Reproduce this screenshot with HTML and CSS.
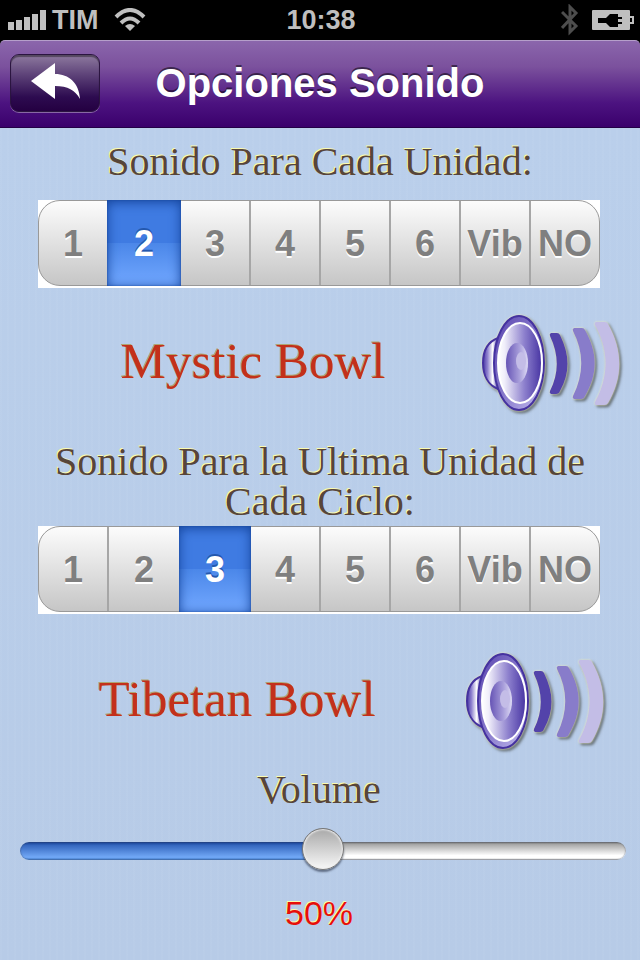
FILE: index.html
```
<!DOCTYPE html>
<html lang="es">
<head>
  <meta charset="utf-8">
  <meta name="viewport" content="width=device-width">
  <title>Opciones Sonido</title>
  <link rel="stylesheet" href="styles.css">
</head>
<body>
  <div class="status">
    <div class="status-left">
      <svg width="38" height="20" viewBox="0 0 38 20" fill="#bfbfbf">
        <path d="M0 12h6v8H0zM8 10h6v10H8zM16 7h6v13h-6zM24 4h6v16h-6zM32 0h6v20h-6z"/>
      </svg>
      <span class="carrier">TIM</span>
      <svg width="32" height="24" viewBox="0 0 32 24">
        <g fill="none" stroke="#bfbfbf" stroke-width="4">
          <path d="M2 9Q16-5 30 9"/>
          <path d="M7 15Q16 6 25 15"/>
        </g>
        <path d="M11 18q5-4 10 0l-5 5z" fill="#bfbfbf"/>
      </svg>
    </div>
    <span>10:38</span>
    <div class="status-right">
      <svg width="18" height="32" viewBox="0 0 18 32" fill="none" stroke="#4d4d4d" stroke-width="3">
        <path d="M1 8l14 14-6 6V3l6 6L1 24"/>
      </svg>
      <svg width="42" height="20" viewBox="0 0 42 20">
        <rect width="38" height="20" rx="1" fill="#bfbfbf"/>
        <path d="M38 7h3v6h-3" fill="none" stroke="#bfbfbf" stroke-width="2"/>
        <path d="M6 8h8l4-4h8v3h4v2h-4v3h4v2h-4v3h-8l-4-4H6z" fill="#000"/>
      </svg>
    </div>
  </div>

  <header class="navbar">
    <button class="back" type="button" aria-label="Atrás">
      <svg width="50" height="40" viewBox="0 0 50 40">
        <path d="M1 18L25 0v11c14 0 24 9 25 25-5-9-12-13-25-13v13z" fill="#fff"/>
      </svg>
    </button>
    <h1>Opciones Sonido</h1>
  </header>

  <main>
    <h2 id="unitTitle">Sonido Para Cada Unidad:</h2>
    <div class="segments" role="radiogroup" aria-labelledby="unitTitle">
      <div class="segments-inner">
        <label><input type="radio" name="unit"><span>1</span></label>
        <label><input type="radio" name="unit" checked><span>2</span></label>
        <label><input type="radio" name="unit"><span>3</span></label>
        <label><input type="radio" name="unit"><span>4</span></label>
        <label><input type="radio" name="unit"><span>5</span></label>
        <label><input type="radio" name="unit"><span>6</span></label>
        <label><input type="radio" name="unit"><span>Vib</span></label>
        <label><input type="radio" name="unit"><span>NO</span></label>
      </div>
    </div>
    <div class="sound">
      <span class="sound-name">Mystic Bowl</span>
      <button class="play" type="button" aria-label="Escuchar Mystic Bowl">
        <svg width="142" height="100" viewBox="0 0 142 100">
          <defs>
            <linearGradient id="back">
              <stop offset="0" stop-color="#4935a4"/>
              <stop offset=".3" stop-color="#8f82cf"/>
              <stop offset=".65" stop-color="#fff"/>
              <stop offset="1" stop-color="#5b49ad"/>
            </linearGradient>
            <linearGradient id="rim" x1="0" y1="0" x2="1" y2="1">
              <stop offset="0" stop-color="#5a45b0"/>
              <stop offset=".5" stop-color="#8678ca"/>
              <stop offset="1" stop-color="#c4bdf0"/>
            </linearGradient>
            <linearGradient id="cone">
              <stop offset="0" stop-color="#fff"/>
              <stop offset=".15" stop-color="#f0eefa"/>
              <stop offset=".6" stop-color="#8d80cd"/>
              <stop offset="1" stop-color="#4633a2"/>
            </linearGradient>
            <linearGradient id="cap">
              <stop offset="0" stop-color="#6654b5"/>
              <stop offset=".6" stop-color="#a79dda"/>
              <stop offset="1" stop-color="#dedaf5"/>
            </linearGradient>
            <g id="speakerShape">
              <path d="M18 24C7 28 3 37 3 49s5 22 15 26z" fill="url(#back)" stroke="#4532a0" stroke-width="2"/>
              <ellipse cx="39" cy="49" rx="25" ry="47" fill="url(#rim)" stroke="#4532a0" stroke-width="2"/>
              <ellipse cx="40" cy="49" rx="22" ry="40" fill="url(#cone)" stroke="#fff" stroke-width="2"/>
              <ellipse cx="37" cy="49" rx="11" ry="20" fill="url(#cap)"/>
              <ellipse cx="41" cy="47" rx="5" ry="9" fill="#c4bde7"/>
              <path d="M71 19h6q2 0 3 2c10 20 10 38 0 56q-1 3-4 3h-5q-2-1-1-3c9-18 9-36 0-55q-1-2 1-3z" fill="#5343aa"/>
              <path d="M94 14h8q2 0 3 2c13 23 13 44 0 66q-1 3-4 3h-7q-2-1-1-3c11-22 11-44 0-65q-1-2 1-3z" fill="#887cca"/>
              <path d="M116 8h9q2 0 3 2c15 27 15 53 0 79q-1 2-4 2h-8q-2-1-1-3c14-26 14-52 0-77q-1-2 1-3z" fill="#c3bde6"/>
            </g>
          </defs>
          <use href="#speakerShape"/>
        </svg>
      </button>
    </div>

    <h2 id="cycleTitle">Sonido Para la Ultima Unidad de Cada Ciclo:</h2>
    <div class="segments" role="radiogroup" aria-labelledby="cycleTitle">
      <div class="segments-inner">
        <label><input type="radio" name="cycle"><span>1</span></label>
        <label><input type="radio" name="cycle"><span>2</span></label>
        <label><input type="radio" name="cycle" checked><span>3</span></label>
        <label><input type="radio" name="cycle"><span>4</span></label>
        <label><input type="radio" name="cycle"><span>5</span></label>
        <label><input type="radio" name="cycle"><span>6</span></label>
        <label><input type="radio" name="cycle"><span>Vib</span></label>
        <label><input type="radio" name="cycle"><span>NO</span></label>
      </div>
    </div>
    <div class="sound sound-cycle">
      <span class="sound-name">Tibetan Bowl</span>
      <button class="play" type="button" aria-label="Escuchar Tibetan Bowl">
        <svg width="142" height="100" viewBox="0 0 142 100"><use href="#speakerShape"/></svg>
      </button>
    </div>

    <div class="volume">
      <label for="volume">Volume</label>
      <input id="volume" type="range" min="0" max="100" value="50">
      <output id="volumeText" for="volume">50%</output>
    </div>
  </main>

  <script>
    var slider = document.getElementById('volume');
    slider.oninput = function () {
      slider.style.setProperty('--level', slider.value + '%');
      document.getElementById('volumeText').textContent = slider.value + '%';
    };
  </script>
</body>
</html>
```
FILE: styles.css
```
* {
  box-sizing: border-box;
}
body {
  margin: 0;
  min-height: 100vh;
  display: flex;
  flex-direction: column;
  background: #000;
  font-family: "Liberation Sans", Arial, sans-serif;
}
svg {
  display: block;
}
button {
  padding: 0;
  border: 0;
  background: none;
  cursor: pointer;
}

/* status bar */
.status {
  display: grid;
  grid-template-columns: 1fr auto 1fr;
  align-items: center;
  height: 40px;
  padding: 0 6px 0 8px;
  color: #bfbfbf;
  font-size: 27px;
  font-weight: bold;
}
.status-left,
.status-right {
  display: flex;
  align-items: center;
}
.status-left {
  gap: 6px;
}
.carrier {
  margin-right: 9px;
}
.status-right {
  justify-content: flex-end;
  gap: 13px;
}

/* navigation bar */
.navbar {
  display: grid;
  grid-template-columns: 90px 1fr 90px;
  align-items: center;
  height: 88px;
  padding: 0 10px 2px;
  border-top: 1px solid #b59fca;
  border-bottom: 1px solid #240046;
  border-radius: 5px 5px 0 0;
  background: linear-gradient(#8b66ac, #7b519d 30%, #4c1380 72%, #3a006c);
}
.navbar h1 {
  margin: 0;
  color: #fff;
  font-size: 40px;
  line-height: 48px;
  text-align: center;
  white-space: nowrap;
  text-shadow: 0 -2px 0 rgba(0, 0, 0, .5);
}
.back {
  display: flex;
  align-items: center;
  justify-content: center;
  height: 58px;
  border: 1px solid #2b1540;
  border-radius: 9px;
  background: linear-gradient(#8e7a9f, #5e4379 35%, #2d0b50 75%, #240041);
  box-shadow: inset 0 2px 1px rgba(0, 0, 0, .4), 0 1px 0 #8968a5;
}

main {
  flex: 1;
  padding-top: 14px;
  background:
    repeating-linear-gradient(90deg, rgba(255, 255, 255, .03) 0 2px, transparent 2px 7px),
    linear-gradient(#bacfeb, #b7cbe7);
}
h2,
.volume label {
  margin: 0;
  color: #57453a;
  font: 40px/40px "Liberation Serif", "Times New Roman", serif;
  text-align: center;
  text-shadow: -1px -1px 0 #fbfbae;
}
h2 {
  padding: 0 40px;
}

/* segmented controls */
.segments {
  height: 88px;
  margin: 4px 40px 0 38px;
  padding-bottom: 2px;
  background: #fff;
}
h2:first-child + .segments {
  margin-top: 18px;
}
.segments-inner {
  display: grid;
  grid-template-columns: 34fr 36fr repeat(6, 35fr);
  height: 86px;
  border: 1px solid #999;
  border-radius: 22px;
  background: linear-gradient(#fcfcfc, #c6c6c6);
}
.segments label {
  display: flex;
  cursor: pointer;
}
.segments input {
  position: absolute;
  opacity: 0;
}
.segments span {
  flex: 1;
  color: #7f7f7f;
  font-size: 36px;
  font-weight: bold;
  line-height: 86px;
  text-align: center;
  text-shadow: 0 2px 0 #fff;
}
.segments label {
  height: 84px;
}
.segments label + label span {
  border-left: 2px solid #a6a6a6;
}
.segments label input:checked + span {
  margin: -1px -2px -1px 0;
  border: 0;
  color: #fff;
  line-height: 88px;
  background: linear-gradient(#3f7be2 50%, #4b87e9 50%, #72a8ff);
  box-shadow: inset 0 2px 12px #14439a, inset 0 0 2px #1d4a99;
  text-shadow: 0 -2px 0 #2458ae;
  z-index: 1;
}

/* sound name and speaker */
.sound {
  display: flex;
  align-items: center;
  margin: 26px 18px 28px 26px;
}
.sound-cycle {
  margin: 38px 34px 18px 10px;
}
.sound-name {
  flex: 1;
  padding-bottom: 6px;
  color: #c3301b;
  font: 51px/56px "Liberation Serif", "Times New Roman", serif;
  text-align: center;
  text-shadow: -1px -1px 0 #b0a572;
}
.play svg {
  overflow: visible;
  filter: drop-shadow(0 0 1px #f0edc0) drop-shadow(2px 2px 1px rgba(60, 65, 60, .65));
}

/* volume */
.volume {
  display: flex;
  flex-direction: column;
  align-items: center;
  padding: 0 14px 0 20px;
}
.volume input {
  --level: 50%;
  appearance: none;
  -webkit-appearance: none;
  width: 100%;
  height: 44px;
  margin: 19px 0 18px;
  background: none;
}
.volume input::-webkit-slider-runnable-track {
  height: 18px;
  border-radius: 9px;
  background:
    linear-gradient(#163f93, #3769c0 20%, #72a9f7 85%, #3d78ca) 0 0 / var(--level) 100% no-repeat,
    linear-gradient(#777, #aaa 15%, #fff 75%, #fff 90%, #aaa);
  box-shadow: inset 0 0 1px 1px rgba(60, 70, 90, .3);
}
.volume input::-webkit-slider-thumb {
  -webkit-appearance: none;
  width: 42px;
  height: 42px;
  margin-top: -14px;
  border: 1px solid #777;
  border-radius: 50%;
  background: linear-gradient(#a9a9a9, #f8f8f8);
  box-shadow: inset 0 0 2px 1px #eee, 0 2px 2px rgba(40, 50, 70, .6);
}
.volume label,
.volume output {
  margin-right: 8px;
}
.volume output {
  color: #e60f0b;
  font-size: 34px;
  line-height: 44px;
  text-shadow: -1px -1px 0 #fbfbae;
}
```
